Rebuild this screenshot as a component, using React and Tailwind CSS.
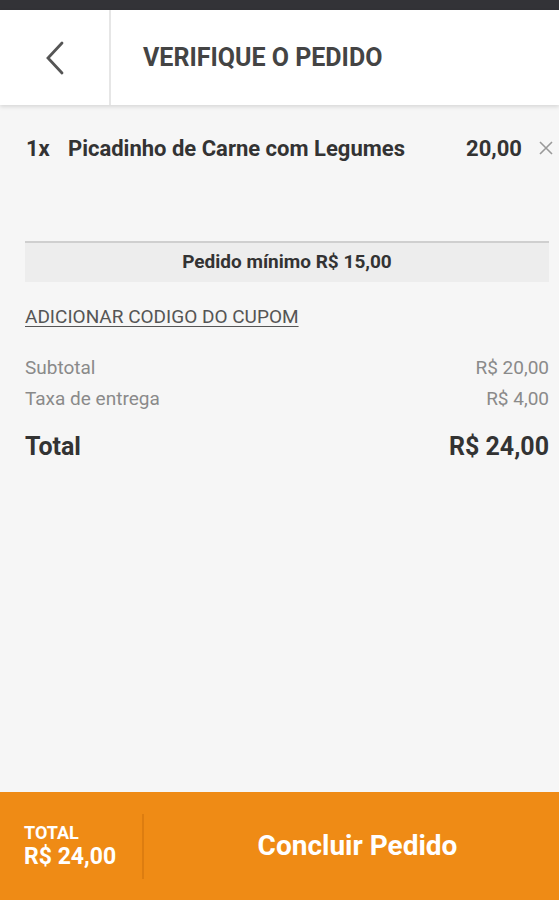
export default function App() {
  return (
    <div className="h-[900px] w-full flex flex-col bg-[#f6f6f6] overflow-hidden" style={{ fontFamily: 'Roboto, "Noto Sans", sans-serif' }}>
      <div className="h-[10px] bg-[#333337] shrink-0" />
      <header className="h-[95px] bg-white flex shrink-0 shadow-[0_2px_4px_rgba(0,0,0,0.12)] relative z-10">
        <div className="w-[111px] border-r-2 border-[#e6e6e6] flex items-center justify-center">
          <svg width="24" height="36" viewBox="0 0 24 36" fill="none">
            <path d="M19 3 L5 18 L19 33" stroke="#555" strokeWidth="2.8" strokeLinecap="round" strokeLinejoin="miter" />
          </svg>
        </div>
        <div className="flex items-center pl-[32px]">
          <span className="text-[25px] font-bold text-[#444]">VERIFIQUE O PEDIDO</span>
        </div>
      </header>
      <main className="flex-1 pl-[25px] pr-[10px]">
        <div className="flex items-center h-[26px] mt-[30px] text-[22px] font-bold text-[#333]">
          <span className="pl-[1px] w-[43px]">1x</span>
          <span className="flex-1">Picadinho de Carne com Legumes</span>
          <span className="mr-[17px]">20,00</span>
          <svg width="14" height="14" viewBox="0 0 14 14" className="mr-[-4px]">
            <path d="M1 1 L13 13 M13 1 L1 13" stroke="#999" strokeWidth="1.6" />
          </svg>
        </div>
        <div className="mt-[80px] border-t-2 border-[#cfcfcf] bg-[#ededed] h-[41px] flex items-center justify-center">
          <span className="text-[19px] font-bold text-[#333]">Pedido mínimo R$ 15,00</span>
        </div>
        <div className="mt-[24px] text-[19px] text-[#555] underline underline-offset-[3px] decoration-[1px] leading-[22px]">
          ADICIONAR CODIGO DO CUPOM
        </div>
        <div className="mt-[29px] flex justify-between text-[19px] text-[#8a8a8a] leading-[22px]">
          <span>Subtotal</span>
          <span>R$ 20,00</span>
        </div>
        <div className="mt-[9px] flex justify-between text-[19px] text-[#8a8a8a] leading-[22px]">
          <span>Taxa de entrega</span>
          <span>R$ 4,00</span>
        </div>
        <div className="mt-[22px] flex justify-between text-[25px] font-bold text-[#333] leading-[30px]">
          <span>Total</span>
          <span>R$ 24,00</span>
        </div>
      </main>
      <footer className="h-[108px] shrink-0 bg-[#ef8b15] flex items-center text-white">
        <div className="w-[142px] pl-[24px] flex flex-col">
          <span className="text-[18px] font-bold leading-[21px]">TOTAL</span>
          <span className="text-[23px] font-bold leading-[27px]">R$ 24,00</span>
        </div>
        <div className="w-[2px] h-[65px] bg-[#dd7d10]" />
        <div className="flex-1 flex items-center justify-center pl-[12px]">
          <span className="text-[28px] font-bold">Concluir Pedido</span>
        </div>
      </footer>
    </div>
  );
}
